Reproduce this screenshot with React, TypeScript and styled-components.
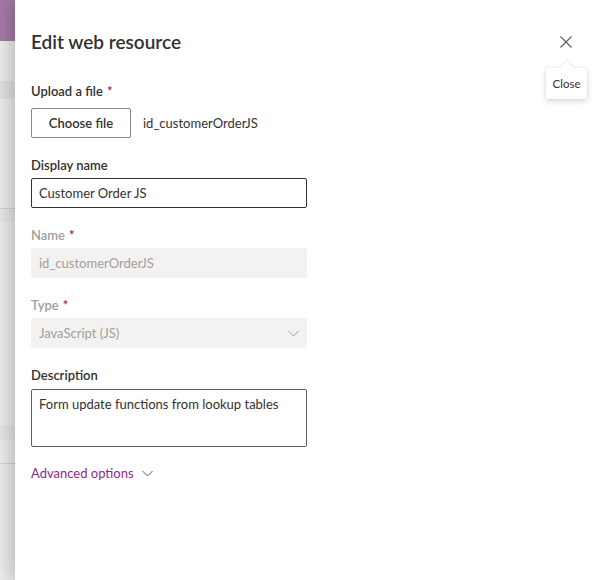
import React from 'react'
import styled, { createGlobalStyle } from 'styled-components'

const GlobalStyle = createGlobalStyle`
  html, body {
    margin: 0;
    padding: 0;
    height: 100%;
    background: #ebebeb;
    font-family: "Segoe UI", Lato, sans-serif;
  }
  #root {
    height: 100%;
  }
`

const Screen = styled.div`
  display: flex;
  width: 595px;
  height: 580px;
  overflow: hidden;
`

const PageStrip = styled.div`
  width: 15px;
  flex: none;
  display: flex;
  flex-direction: column;
  background: #ebebeb;
`

const StripBar = styled.div<{ $h: number; $bg: string; $line?: boolean }>`
  height: ${p => p.$h}px;
  flex: none;
  background: ${p => p.$bg};
  border-top: ${p => (p.$line ? '1px solid #cfcfcf' : 'none')};
`

const Panel = styled.div`
  flex: 1;
  position: relative;
  background: #ffffff;
  box-shadow: -6px 0 14px rgba(0, 0, 0, 0.18);
  display: flex;
  flex-direction: column;
`

const Header = styled.div`
  display: flex;
  align-items: center;
  justify-content: space-between;
  padding: 26px 13px 0 16px;
`

const Title = styled.h1`
  margin: 0;
  font-size: 19px;
  line-height: 28px;
  font-weight: 600;
  color: #323130;
`

const CloseButton = styled.button`
  width: 32px;
  height: 32px;
  border: none;
  background: transparent;
  display: flex;
  align-items: center;
  justify-content: center;
  padding: 0;
  cursor: pointer;
`

const Tooltip = styled.div`
  position: absolute;
  top: 68px;
  left: 531px;
  width: 41px;
  height: 31px;
  display: flex;
  align-items: center;
  justify-content: center;
  background: #ffffff;
  font-size: 11.5px;
  color: #323130;
  border-radius: 2px;
  box-shadow: 0 2px 6px rgba(0, 0, 0, 0.16), 0 0 2px rgba(0, 0, 0, 0.1);

  &::before {
    content: '';
    position: absolute;
    top: -5px;
    left: 50%;
    width: 10px;
    height: 10px;
    margin-left: -5px;
    background: #ffffff;
    transform: rotate(45deg);
    box-shadow: -1px -1px 2px rgba(0, 0, 0, 0.08);
  }
`

const TipText = styled.span`
  position: relative;
`

const Body = styled.div`
  display: flex;
  flex-direction: column;
  padding: 23px 16px 0 16px;
`

const Field = styled.div<{ $gap?: number }>`
  display: flex;
  flex-direction: column;
  margin-bottom: ${p => p.$gap ?? 17}px;
`

const Label = styled.label<{ $disabled?: boolean; $mb?: number }>`
  font-size: 13px;
  line-height: 20px;
  font-weight: 600;
  color: ${p => (p.$disabled ? '#a19f9d' : '#323130')};
  margin-bottom: ${p => p.$mb ?? 3}px;
`

const Required = styled.span`
  color: #a4262c;
  margin-left: 4px;
`

const UploadRow = styled.div`
  display: flex;
  align-items: center;
  gap: 12px;
`

const ChooseButton = styled.button`
  width: 100px;
  height: 30px;
  border: 1px solid #8a8886;
  border-radius: 2px;
  background: #ffffff;
  font-family: inherit;
  font-size: 13px;
  font-weight: 600;
  color: #323130;
  padding: 0;
`

const FileName = styled.span`
  font-size: 13px;
  color: #323130;
`

const Box = styled.div<{ $variant: 'active' | 'disabled' | 'area' }>`
  width: 276px;
  box-sizing: border-box;
  height: ${p => (p.$variant === 'area' ? 58 : 30)}px;
  display: flex;
  align-items: ${p => (p.$variant === 'area' ? 'flex-start' : 'center')};
  justify-content: space-between;
  padding: ${p => (p.$variant === 'area' ? '4px 7px' : '0 7px')};
  font-size: 13px;
  line-height: 20px;
  border-radius: 2px;
  color: ${p => (p.$variant === 'disabled' ? '#a19f9d' : '#323130')};
  background: ${p => (p.$variant === 'disabled' ? '#f3f2f1' : '#ffffff')};
  border: 1px solid
    ${p =>
      p.$variant === 'disabled' ? '#f3f2f1' : p.$variant === 'active' ? '#323130' : '#605e5c'};
`

const AdvancedLink = styled.button`
  align-self: flex-start;
  display: flex;
  align-items: center;
  gap: 8px;
  border: none;
  background: transparent;
  padding: 0;
  font-family: inherit;
  font-size: 13px;
  line-height: 20px;
  color: #8b2a8c;
  cursor: pointer;
`

const Chevron: React.FC<{ color: string }> = ({ color }) => (
  <svg width="11" height="7" viewBox="0 0 11 7" fill="none">
    <path d="M0.5 1 L5.5 6 L10.5 1" stroke={color} strokeWidth="1" />
  </svg>
)

const CloseIcon = () => (
  <svg width="12" height="12" viewBox="0 0 12 12" fill="none">
    <path d="M0.5 0.5 L11.5 11.5 M11.5 0.5 L0.5 11.5" stroke="#605e5c" strokeWidth="1.1" />
  </svg>
)

const App: React.FC = () => {
  return (
    <>
      <GlobalStyle />
      <Screen>
        <PageStrip>
          <StripBar $h={41} $bg="#a47aa6" />
          <StripBar $h={40} $bg="#ebebeb" />
          <StripBar $h={18} $bg="#dfdfdd" />
          <StripBar $h={109} $bg="#ebebeb" />
          <StripBar $h={13} $bg="#e4e4e4" $line />
          <StripBar $h={203} $bg="#ebebeb" />
          <StripBar $h={15} $bg="#e3e3e3" />
          <StripBar $h={23} $bg="#ebebeb" />
          <StripBar $h={118} $bg="#ebebeb" $line />
        </PageStrip>
        <Panel>
          <Header>
            <Title>Edit web resource</Title>
            <CloseButton aria-label="Close">
              <CloseIcon />
            </CloseButton>
          </Header>
          <Tooltip>
            <TipText>Close</TipText>
          </Tooltip>
          <Body>
            <Field $gap={17}>
              <Label $mb={7}>
                Upload a file<Required>*</Required>
              </Label>
              <UploadRow>
                <ChooseButton>Choose file</ChooseButton>
                <FileName>id_customerOrderJS</FileName>
              </UploadRow>
            </Field>
            <Field>
              <Label>Display name</Label>
              <Box $variant="active">Customer Order JS</Box>
            </Field>
            <Field>
              <Label $disabled>
                Name<Required>*</Required>
              </Label>
              <Box $variant="disabled">id_customerOrderJS</Box>
            </Field>
            <Field>
              <Label $disabled>
                Type<Required>*</Required>
              </Label>
              <Box $variant="disabled">
                JavaScript (JS)
                <Chevron color="#a19f9d" />
              </Box>
            </Field>
            <Field $gap={16}>
              <Label $mb={4}>Description</Label>
              <Box $variant="area">Form update functions from lookup tables</Box>
            </Field>
            <AdvancedLink>
              Advanced options
              <Chevron color="#605e5c" />
            </AdvancedLink>
          </Body>
        </Panel>
      </Screen>
    </>
  )
}

export default App
